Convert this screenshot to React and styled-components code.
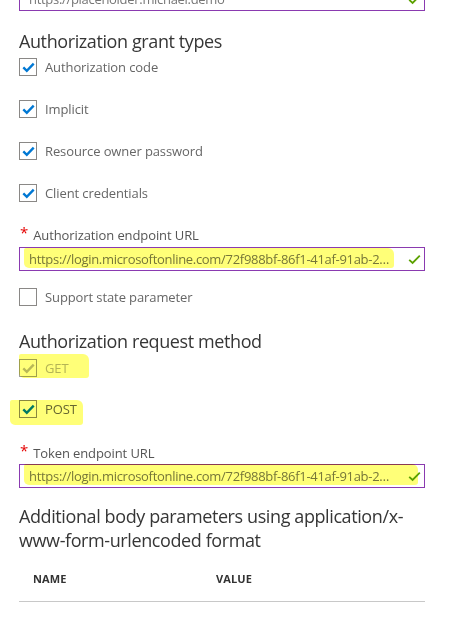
import React from 'react';
import styled, { createGlobalStyle, css } from 'styled-components';

const GlobalStyle = createGlobalStyle`
  html, body {
    margin: 0;
    padding: 0;
    background: #fff;
    overflow: hidden;
  }
  body {
    font-family: "Open Sans", "Noto Sans", sans-serif;
    color: #323130;
  }
`;

const Page = styled.div`
  width: 452px;
  box-sizing: border-box;
  padding: 0 27px 0 19px;
  display: flex;
  flex-direction: column;
`;

const marker = css`
  &::after {
    content: '';
    position: absolute;
    pointer-events: none;
    background: #ffff78;
    mix-blend-mode: multiply;
    border-radius: 2px 6px 3px 5px;
  }
`;

const Field = styled.div`
  position: relative;
  height: 24px;
  box-sizing: border-box;
  border: 1px solid #8a3ab0;
  display: flex;
  align-items: center;
  padding: 0 3px 0 9px;
  margin-top: ${(p) => p.$top}px;
  ${(p) => p.$marked && marker}
  &::after {
    left: 4px;
    top: ${(p) => (p.$wide ? '-1px' : '0')};
    bottom: 2px;
    right: ${(p) => (p.$wide ? '6px' : '30px')};
  }
`;

const FieldText = styled.span`
  flex: 1;
  min-width: 0;
  font-size: 13px;
  color: #767676;
  letter-spacing: -0.3px;
  white-space: nowrap;
  overflow: hidden;
  text-overflow: ellipsis;
  padding-right: 14px;
`;

const Valid = styled.svg`
  flex: none;
  width: 13px;
  height: 11px;
`;

const Title = styled.h2`
  margin: ${(p) => p.$top}px 0 0;
  font-size: 18px;
  line-height: 24px;
  font-weight: 400;
  color: #363636;
  letter-spacing: -0.4px;
`;

const Row = styled.label`
  position: relative;
  display: flex;
  align-items: center;
  gap: 8px;
  height: 18px;
  margin-top: ${(p) => p.$top}px;
  align-self: flex-start;
  ${(p) => p.$marked && marker}
  &::after {
    left: ${(p) => p.$markLeft ?? 0}px;
    right: ${(p) => p.$markRight ?? -14}px;
    top: ${(p) => p.$markTop ?? -5}px;
    bottom: ${(p) => p.$markBottom ?? -2}px;
  }
`;

const Box = styled.span`
  width: 18px;
  height: 18px;
  box-sizing: border-box;
  border: 1px solid ${(p) => (p.$disabled ? '#a0a0a0' : '#8a8886')};
  background: #fff;
  display: flex;
  align-items: center;
  justify-content: center;
`;

const RowText = styled.span`
  font-size: 13px;
  color: ${(p) => (p.$disabled ? '#b4b4b4' : '#666')};
  letter-spacing: -0.1px;
`;

const FieldLabel = styled.div`
  margin-top: ${(p) => p.$top}px;
  height: 18px;
  display: flex;
  align-items: center;
  gap: 5px;
  font-size: 13px;
  color: #555;
  letter-spacing: -0.1px;
`;

const Star = styled.span`
  color: #e50000;
  font-size: 15px;
  line-height: 1;
  align-self: flex-start;
  margin-top: -1px;
  margin-left: 1px;
`;

const Table = styled.div`
  margin-top: 19px;
  display: grid;
  grid-template-columns: 183px 1fr;
  padding: 0 0 14px 14px;
  border-bottom: 1px solid #c8c8c8;
`;

const HeadCell = styled.div`
  font-size: 11px;
  line-height: 16px;
  font-weight: 700;
  color: #333;
  letter-spacing: 0.1px;
`;

const Check = ({ color = '#0078d4', width = 2.4 }) => (
  <svg width="13" height="11" viewBox="0 0 13 11">
    <path d="M1.3 5.4 L4.8 8.8 L11.7 1.7" fill="none" stroke={color} strokeWidth={width} />
  </svg>
);

const ValidIcon = () => (
  <Valid viewBox="0 0 13 11">
    <path d="M1.2 5.8 L4.6 9 L11.8 1.6" fill="none" stroke="#5ca100" strokeWidth="1.8" />
  </Valid>
);

const CheckRow = ({ label, checked, disabled, checkColor, ...rest }) => (
  <Row {...rest}>
    <Box $disabled={disabled}>
      {checked && <Check color={checkColor || (disabled ? '#b8b8b8' : '#0078d4')} />}
    </Box>
    <RowText $disabled={disabled}>{label}</RowText>
  </Row>
);

const URL = 'https://login.microsoftonline.com/72f988bf-86f1-41af-91ab-2d7cd011db47/oauth2/authorize';

export default function App() {
  return (
    <>
      <GlobalStyle />
      <Page>
        <Field $top={-13}>
          <FieldText>https://placeholder.michael.demo</FieldText>
          <ValidIcon />
        </Field>

        <Title $top={18}>Authorization grant types</Title>
        <CheckRow $top={5} checked label="Authorization code" />
        <CheckRow $top={24} checked label="Implicit" />
        <CheckRow $top={24} checked label="Resource owner password" />
        <CheckRow $top={24} checked label="Client credentials" />

        <FieldLabel $top={24}>
          <Star>*</Star>
          Authorization endpoint URL
        </FieldLabel>
        <Field $top={3} $marked>
          <FieldText>{URL}</FieldText>
          <ValidIcon />
        </Field>

        <CheckRow $top={17} label="Support state parameter" />

        <Title $top={23}>Authorization request method</Title>
        <CheckRow $top={6} checked disabled label="GET" $marked $markRight={-20} $markTop={-5} $markBottom={-1} />
        <CheckRow
          $top={23}
          checked
          label="POST"
          $marked
          $markLeft={-9}
          $markRight={-6}
          $markTop={0}
          $markBottom={-7}
        />

        <FieldLabel $top={26}>
          <Star>*</Star>
          Token endpoint URL
        </FieldLabel>
        <Field $top={2} $marked $wide>
          <FieldText>{URL.replace('authorize', 'token')}</FieldText>
          <ValidIcon />
        </Field>

        <Title $top={16}>
          Additional body parameters using application/x-
          <br />
          www-form-urlencoded format
        </Title>

        <Table>
          <HeadCell>NAME</HeadCell>
          <HeadCell>VALUE</HeadCell>
        </Table>
      </Page>
    </>
  );
}
